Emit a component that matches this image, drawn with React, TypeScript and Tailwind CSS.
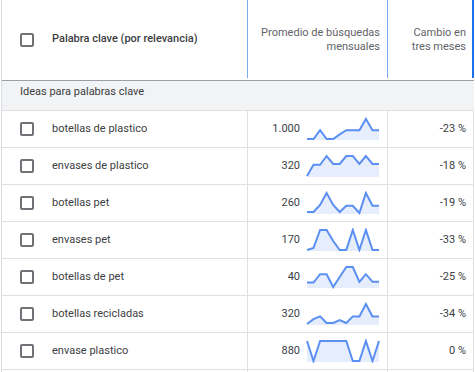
import React from 'react'

type Row = { keyword: string; avg: string; change: string; trend: number[] }

const ROWS: Row[] = [
  { keyword: 'botellas de plastico', avg: '1.000', change: '-23 %', trend: [0, 0, 0.44, 0, 0, 0.23, 0.44, 0.44, 0.44, 1, 0.44, 0.44] },
  { keyword: 'envases de plastico', avg: '320', change: '-18 %', trend: [0, 0.56, 0.56, 1, 0.6, 0.6, 1, 1, 0.6, 1, 0.6, 0.6] },
  { keyword: 'botellas pet', avg: '260', change: '-19 %', trend: [0.05, 0.05, 0.4, 1, 0.4, 0.05, 0.36, 0.36, 0, 1, 0.36, 0.36] },
  { keyword: 'envases pet', avg: '170', change: '-33 %', trend: [0, 0.1, 1, 1, 0.45, 0, 0, 1, 0, 1, 0, 0] },
  { keyword: 'botellas de pet', avg: '40', change: '-25 %', trend: [0.22, 0.22, 0.64, 0.64, 0, 0.5, 1, 1, 0.26, 0.64, 0.26, 0.26] },
  { keyword: 'botellas recicladas', avg: '320', change: '-34 %', trend: [0, 0.24, 0.38, 0.05, 0.05, 0.2, 0.05, 0.38, 0.38, 1, 0.38, 0.38] },
  { keyword: 'envase plastico', avg: '880', change: '0 %', trend: [1, 0, 1, 1, 1, 1, 1, 0, 0, 1, 0, 1] },
]

function Sparkline({ data }: { data: number[] }) {
  const pts = data.map((v, i) => [1 + (i * 72) / 11, 2 + (1 - v) * 20] as const)
  const line = pts.map(p => `${p[0].toFixed(1)},${p[1].toFixed(1)}`).join(' ')
  const area = `1,23 ${line} 73,23`
  return (
    <svg width="74" height="24" viewBox="0 0 74 24" className="shrink-0">
      <polygon points={area} fill="#e6eefd" />
      <polyline points={line} fill="none" stroke="#5b8ff2" strokeWidth="2" strokeLinejoin="miter" />
    </svg>
  )
}

function Checkbox() {
  return <span className="block w-[14px] h-[14px] rounded-[2px] border-2 border-[#6f7377] shrink-0" />
}

export default function App() {
  return (
    <div className="w-[475px] h-[372px] overflow-hidden bg-white font-['Roboto',sans-serif] text-[11px] text-[#3c4043] pl-px">
      <div className="w-[473px] border-l border-[#dadce0] h-full">
        {/* cabecera */}
        <div className="flex h-[81px] border-b border-[#9aa0a6]">
          <div className="w-[245px] flex items-center pl-[18px] gap-[18px] pb-px">
            <Checkbox />
            <span className="font-medium text-[#3c4043]">Palabra clave (por relevancia)</span>
          </div>
          <div className="w-[140px] flex items-center justify-end pr-[7px] pb-px text-right text-[#5f6368] leading-[14px] relative">
            <span className="absolute left-0 top-0 h-[78px] w-px bg-[#7eaaf3]" />
            <span>Promedio de búsquedas<br />mensuales</span>
          </div>
          <div className="w-[86px] flex items-center justify-end pr-[7px] pb-px text-right text-[#5f6368] leading-[14px] relative">
            <span className="absolute left-0 top-0 h-[78px] w-px bg-[#7eaaf3]" />
            <span className="absolute right-[-1px] top-0 h-[78px] w-[2px] bg-[#1a73e8]" />
            <span>Cambio en<br />tres meses</span>
          </div>
        </div>

        {/* sección */}
        <div className="h-[30px] flex items-center pl-[18px] pb-[6px] bg-[#f1f3f4] border-b border-[#e0e0e0] text-[#3c4043]">
          Ideas para palabras clave
        </div>

        {ROWS.map(r => (
          <div key={r.keyword} className="flex h-[37px] border-b border-[#e0e0e0]">
            <div className="w-[245px] flex items-center pl-[18px] gap-[18px]">
              <Checkbox />
              <span>{r.keyword}</span>
            </div>
            <div className="w-[140px] flex items-center justify-end gap-[6px] pr-[7px] border-l border-[#e0e0e0]">
              <span>{r.avg}</span>
              <Sparkline data={r.trend} />
            </div>
            <div className="w-[87px] flex items-center justify-end pr-[7px] border-x border-[#e0e0e0]">
              {r.change}
            </div>
          </div>
        ))}
        <div className="flex h-[37px]">
          <div className="w-[245px]" />
          <div className="w-[140px] border-l border-[#e0e0e0]" />
          <div className="w-[87px] border-x border-[#e0e0e0]" />
        </div>
      </div>
    </div>
  )
}
